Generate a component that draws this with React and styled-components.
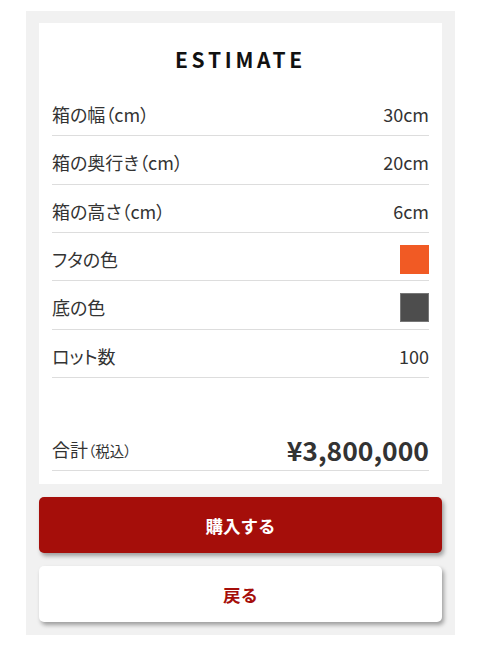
import React from 'react';
import styled, { createGlobalStyle } from 'styled-components';

const GlobalStyle = createGlobalStyle`
  body {
    margin: 0;
    background: #ffffff;
    font-family: "Noto Sans CJK JP", "Noto Sans", sans-serif;
    color: #333333;
  }
`;

const Panel = styled.div`
  width: 429px;
  margin: 11px auto 0;
  padding: 12px 13px 13px;
  box-sizing: border-box;
  background: #f1f1f1;
  display: flex;
  flex-direction: column;
  gap: 13px;
`;

const Card = styled.div`
  background: #ffffff;
  padding: 0 13px 13px;
`;

const Title = styled.h1`
  margin: 0;
  height: 65px;
  display: flex;
  align-items: center;
  justify-content: center;
  font-family: "Noto Sans CJK JP", sans-serif;
  font-size: 21px;
  font-weight: 700;
  letter-spacing: 3.7px;
  color: #111111;
  padding-top: 7px;
  box-sizing: border-box;
`;

const Row = styled.div`
  height: 48.33px;
  box-sizing: border-box;
  padding-top: 5px;
  display: flex;
  align-items: center;
  justify-content: space-between;
  border-bottom: 1px solid #dddddd;
  font-size: 18px;
  font-feature-settings: "palt";
  margin-top: ${(p) => (p.$total ? '45px' : '0')};
`;

const Label = styled.span`
  color: #333333;
`;

const Small = styled.span`
  font-size: 14.5px;
`;

const Value = styled.span`
  color: #333333;
`;

const Price = styled.span`
  font-size: 26.5px;
  font-weight: 700;
  color: #333333;
`;

const Swatch = styled.span`
  width: 29px;
  height: 29px;
  box-sizing: border-box;
  background: ${(p) => p.$color};
  border: 1px solid ${(p) => p.$border || p.$color};
`;

const Button = styled.button`
  height: 56px;
  border: none;
  border-radius: 5px;
  font-family: "Noto Sans CJK JP", sans-serif;
  font-size: 17.5px;
  font-weight: 700;
  cursor: pointer;
  background: ${(p) => (p.$primary ? '#a50e0a' : '#ffffff')};
  color: ${(p) => (p.$primary ? '#ffffff' : '#a50e0a')};
  box-shadow: 2px 3px 4px rgba(0, 0, 0, 0.35);
`;

const rows = [
  ['箱の幅（cm）', '30cm'],
  ['箱の奥行き（cm）', '20cm'],
  ['箱の高さ（cm）', '6cm'],
];

export default function App() {
  return (
    <>
      <GlobalStyle />
      <Panel>
        <Card>
          <Title>ESTIMATE</Title>
          {rows.map(([label, value]) => (
            <Row key={label}>
              <Label>{label}</Label>
              <Value>{value}</Value>
            </Row>
          ))}
          <Row>
            <Label>フタの色</Label>
            <Swatch $color="#f15a24" />
          </Row>
          <Row>
            <Label>底の色</Label>
            <Swatch $color="#4d4d4d" $border="#777777" />
          </Row>
          <Row>
            <Label>ロット数</Label>
            <Value>100</Value>
          </Row>
          <Row $total>
            <Label>
              合計<Small>（税込）</Small>
            </Label>
            <Price>¥3,800,000</Price>
          </Row>
        </Card>
        <Button $primary>購入する</Button>
        <Button>戻る</Button>
      </Panel>
    </>
  );
}
